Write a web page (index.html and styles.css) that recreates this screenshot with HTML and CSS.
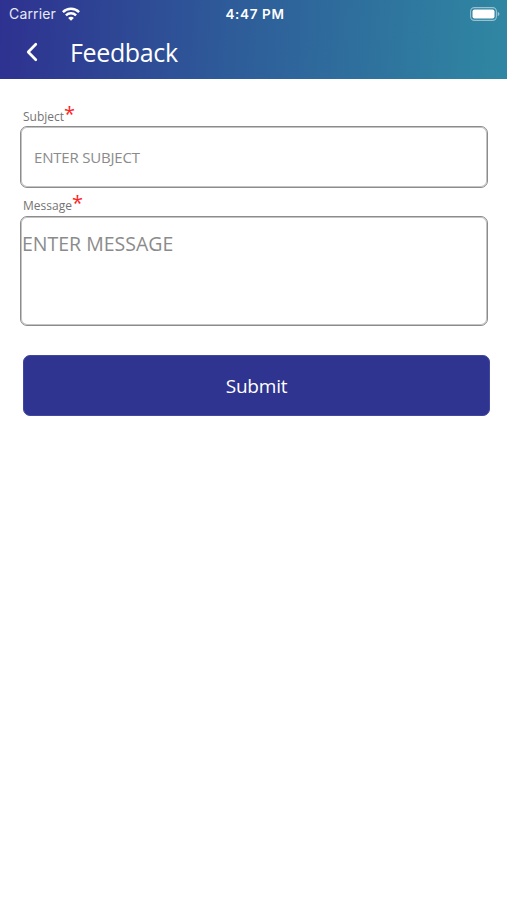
FILE: index.html
```html
<!DOCTYPE html>
<html lang="en">
<head>
<meta charset="utf-8">
<title>Feedback</title>
<link rel="stylesheet" href="styles.css">
</head>
<body>
<header class="header">
  <div class="status">
    <div class="carrier"><span>Carrier</span>
      <svg class="wifi" width="18" height="14" viewBox="0 0 18 14" fill="none" stroke="#fff" stroke-width="2.500"><path d="M.9 5.100C5.400.6 12.600.6 17.100 5.100M3.900 8.300c2.900-2.700 7.300-2.700 10.200 0"/><path d="M9 13.800 6.100 10.900c1.600-1.500 4.200-1.500 5.800 0z" fill="#fff" stroke="none"/></svg>
    </div>
    <div class="time">4:47 PM</div>
    <svg class="battery" width="30" height="14" viewBox="0 0 30 14"><rect x=".6" y=".6" width="25.800" height="12.800" rx="3.800" fill="none" stroke="#fff" stroke-opacity=".5" stroke-width="1.100"/><rect x="2.500" y="2.500" width="22" height="9" rx="2" fill="#fff"/><path d="M27.700 4.800v4.400q1.800-.7 1.800-2.200t-1.800-2.200z" fill="#fff" fill-opacity=".5"/></svg>
  </div>
  <div class="nav">
    <svg class="back" width="12" height="20" viewBox="0 0 12 20" fill="none" stroke="#fff" stroke-width="2.700" stroke-linecap="round" stroke-linejoin="round"><path d="M9.800 2.300 2.200 10l7.600 7.700"/></svg>
    <h1 class="title">Feedback</h1>
  </div>
</header>
<main class="form">
  <label class="label" for="subject">Subject<span class="star">*</span></label>
  <input class="field subject" id="subject" placeholder="ENTER SUBJECT">
  <label class="label second" for="message">Message<span class="star">*</span></label>
  <textarea class="field message" id="message" placeholder="ENTER MESSAGE"></textarea>
  <button class="submit">Submit</button>
</main>
</body>
</html>
```
FILE: styles.css
```css
* { box-sizing: border-box; }
body {
  margin: 0;
  min-height: 900px;
  background: #fff;
  font-family: "Open Sans", sans-serif;
}
.header {
  height: 79px;
  background: linear-gradient(93deg, #2e3190 0%, #2e5c99 46%, #2f85a2 97%);
  color: #fff;
}
.status {
  display: grid;
  grid-template-columns: 1fr auto 1fr;
  align-items: center;
  height: 27px;
  padding: 0 7px 0 9px;
  font: 14px/20px Inter, sans-serif;
}
.carrier { display: flex; align-items: center; gap: 6px; color: #e6e9f6; letter-spacing: .15px; }
.wifi { display: block; }
.time { font-size: 13.500px; font-weight: 600; letter-spacing: .65px; margin-right: -1px; }
.battery { justify-self: end; }
.nav {
  display: flex;
  align-items: center;
  gap: 32px;
  height: 52px;
  padding: 0 0 2px 26px;
}
.title { margin: 0; font-size: 25px; font-weight: 400; line-height: 34px; letter-spacing: -.35px; }
.form { display: flex; flex-direction: column; padding: 27px 17px 0 20px; }
.label {
  display: flex;
  align-items: flex-start;
  height: 20px;
  padding-left: 3px;
  color: #747474;
  font-size: 12px;
  line-height: 21px;
}
.star { color: #ff1f26; font-size: 20px; line-height: 16px; font-weight: 500; }
.second { height: 21px; margin-top: 7px; line-height: 21px; }
.field {
  display: block;
  width: 468px;
  border: 1px solid #8c8c8c;
  border-radius: 7px;
  background: #fff;
  box-shadow: inset 0 0 0 1px #c4c4c4;
  font-family: inherit;
  outline: none;
  resize: none;
}
.field::placeholder { color: #8b8b8b; opacity: 1; }
.subject { height: 62px; padding: 0 13px; font-size: 15px; letter-spacing: -.2px; }
.message { height: 110px; padding: 14px 1px; font-size: 19.500px; line-height: 26px; }
.submit {
  width: 467px;
  height: 61px;
  margin: 29px 0 0 3px;
  padding: 1px 0 0;
  border: 1px solid #41479f;
  border-radius: 7px;
  background: #2e348f;
  color: #fff;
  font-family: inherit;
  font-size: 19px;
  letter-spacing: -.2px;
}
```
